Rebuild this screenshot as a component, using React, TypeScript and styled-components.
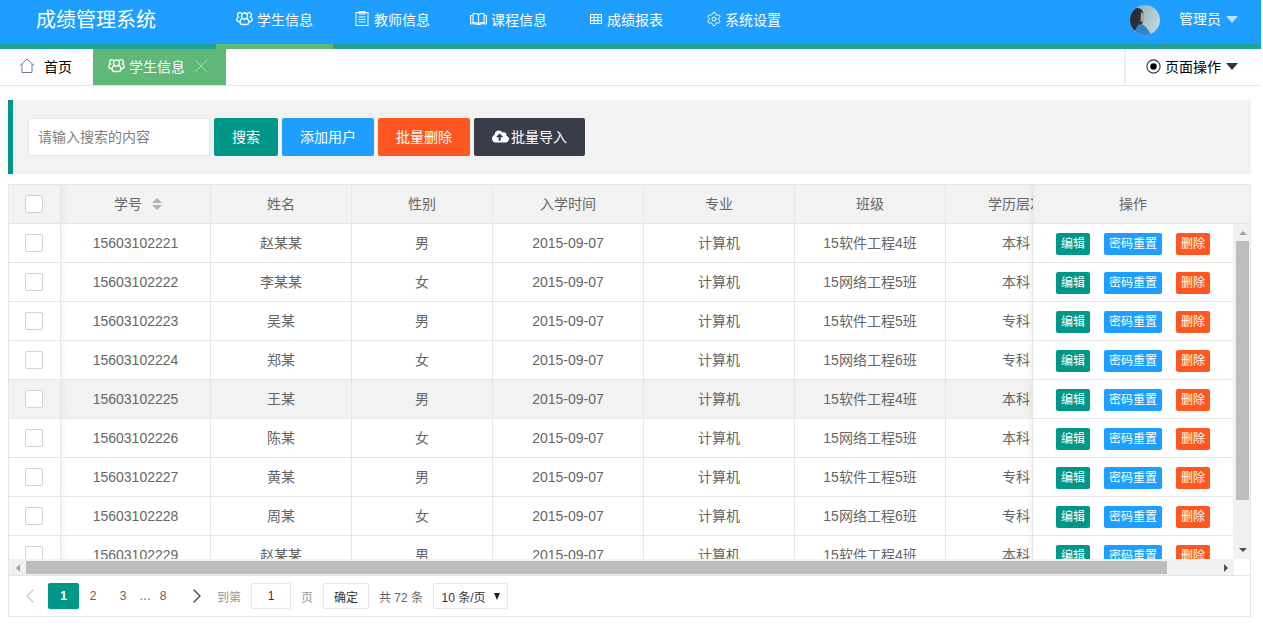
import React from 'react';
import styled, { createGlobalStyle } from 'styled-components';
import { ChevronLeft, ChevronRight, Settings, X } from 'lucide-react';
import { FaCloudUploadAlt } from 'react-icons/fa';

const FONT = '"Liberation Sans", "Noto Sans CJK SC", sans-serif';

const GlobalStyle = createGlobalStyle`
  html, body {
    margin: 0;
    padding: 0;
    background: #fff;
    overflow: hidden;
    font-family: ${FONT};
    font-size: 14px;
    color: #666;
  }
  * { box-sizing: border-box; }
`;

const Page = styled.div`
  width: 1261px;
  height: 629px;
  overflow: hidden;
`;

/* top bar */
const Header = styled.header`
  height: 49px;
  display: flex;
  background: #1e9fff;
  border-bottom: 5px solid #20a29a;
  color: #fff;
`;

const Title = styled.div`
  width: 216px;
  padding-left: 36px;
  font-size: 20px;
  line-height: 40px;
`;

const Nav = styled.nav`
  display: flex;
  flex: 1;
`;

const NavItem = styled.a<{ $active?: boolean; $w: number; $gap?: number }>`
  position: relative;
  flex: none;
  width: ${p => p.$w}px;
  height: 44px;
  padding-left: 20px;
  display: flex;
  align-items: flex-start;
  padding-top: 11px;
  gap: ${p => p.$gap ?? 4}px;
  line-height: 18px;
  white-space: nowrap;
  ${p => p.$active && `
    margin-right: 2px;
    &::after {
      content: '';
      position: absolute;
      left: 0;
      right: 0;
      bottom: -5px;
      height: 5px;
      background: #5fb878;
    }
  `}
`;

const User = styled.div`
  width: 131px;
  display: flex;
  align-items: flex-start;
  padding-top: 5px;
  line-height: 29px;
`;

const Avatar = styled.svg`
  width: 30px;
  height: 30px;
  border-radius: 50%;
  margin-right: 19px;
`;

const Caret = styled.i<{ $color: string }>`
  display: inline-block;
  width: 0;
  height: 0;
  margin-left: 5px;
  border-left: 6px solid transparent;
  border-right: 6px solid transparent;
  border-top: 7px solid ${p => p.$color};
`;

const UserCaret = styled(Caret)`
  margin-top: 11px;
`;

/* tab bar */
const TabBar = styled.div`
  height: 37px;
  display: flex;
  border-bottom: 1px solid #e4e4e4;
  color: #000;
`;

const Tab = styled.div<{ $active?: boolean; $w: number; $pad: number }>`
  width: ${p => p.$w}px;
  padding-left: ${p => p.$pad}px;
  padding-bottom: 2px;
  display: flex;
  align-items: center;
  gap: 4px;
  color: ${p => (p.$active ? '#fff' : '#000')};
  background: ${p => (p.$active ? '#5fb878' : '#fff')};
`;

const HomeLabel = styled.span`
  margin-left: 5px;
`;

const TabClose = styled(X)`
  margin-left: 1px;
  color: rgba(255, 255, 255, 0.5);
`;

const PageOps = styled.div`
  margin-left: auto;
  width: 137px;
  padding-left: 20px;
  padding-bottom: 2px;
  display: flex;
  align-items: center;
  gap: 4px;
  border-left: 2px solid #eee;
`;

const OpsCaret = styled(Caret)`
  margin-left: 1px;
  margin-top: 1px;
`;

/* search */
const SearchPanel = styled.section`
  margin: 14px 10px 10px 8px;
  height: 74px;
  padding: 18px 15px;
  display: flex;
  gap: 4px;
  background: #f2f2f2;
  border-left: 5px solid #009688;
`;

const SearchInput = styled.input`
  width: 182px;
  height: 38px;
  padding: 0 9px;
  border: 1px solid #e6e6e6;
  border-radius: 2px;
  outline: none;
  background: #fff;
  font-family: ${FONT};
  font-size: 14px;
  &::placeholder { color: #808080; }
`;

const Button = styled.button<{ $bg: string; $w: number }>`
  width: ${p => p.$w}px;
  height: 38px;
  padding: 0 0 2px;
  display: flex;
  align-items: center;
  justify-content: center;
  gap: 2px;
  border: 0;
  border-radius: 2px;
  color: #fff;
  background: ${p => p.$bg};
  font-family: ${FONT};
  font-size: 14px;
`;

/* table */
const TableBox = styled.section`
  margin-left: 8px;
  width: 1243px;
  height: 433px;
  display: flex;
  flex-direction: column;
  border: 1px solid #e6e6e6;
`;

const HeadRow = styled.div`
  height: 39px;
  flex: none;
  display: flex;
  background: #f2f2f2;
  border-bottom: 1px solid #e6e6e6;
`;

const Body = styled.div`
  height: 335px;
  flex: none;
  display: flex;
  overflow: hidden;
`;

const Rows = styled.div`
  flex: 1;
  min-width: 0;
`;

const Row = styled.div<{ $hover?: boolean }>`
  height: 39px;
  display: flex;
  background: ${p => (p.$hover ? '#f2f2f2' : '#fff')};
  border-bottom: 1px solid #e6e6e6;
`;

const CheckCell = styled.div`
  position: relative;
  z-index: 1;
  flex: none;
  width: 52px;
  display: flex;
  align-items: center;
  padding-left: 16px;
  border-right: 1px solid #e6e6e6;
  box-shadow: 1px 0 6px rgba(0, 0, 0, 0.08);
  clip-path: inset(0 -8px 0 0);
`;

const CheckBox = styled.i`
  display: block;
  width: 18px;
  height: 18px;
  background: #fff;
  border: 1px solid #d2d2d2;
  border-radius: 2px;
`;

const Scroller = styled.div`
  flex: 1;
  min-width: 0;
  display: flex;
  overflow: hidden;
`;

/* $cjk lifts the text a pixel, the CJK font sits lower than the latin one */
const Cell = styled.div<{ $w: number; $cjk?: boolean }>`
  flex: none;
  width: ${p => p.$w}px;
  padding-bottom: ${p => (p.$cjk ? 2 : 0)}px;
  display: flex;
  align-items: center;
  justify-content: center;
  white-space: nowrap;
  border-right: 1px solid #e6e6e6;
`;

const SortCell = styled(Cell)`
  gap: 10px;
  padding-left: 5px;
`;

const ActionHead = styled.div`
  position: relative;
  flex: none;
  width: 217px;
  display: flex;
  align-items: center;
  justify-content: center;
  padding: 0 18px 2px 0;
  border-left: 1px solid #e6e6e6;
  box-shadow: -1px 0 6px rgba(0, 0, 0, 0.08);
  clip-path: inset(0 0 0 -8px);
`;

const ActionCell = styled.div`
  position: relative;
  flex: none;
  width: 201px;
  padding-top: 2px;
  display: flex;
  align-items: center;
  justify-content: center;
  gap: 14px;
  background: #fff;
  border-left: 1px solid #e6e6e6;
  box-shadow: -1px 0 6px rgba(0, 0, 0, 0.08);
  clip-path: inset(0 0 0 -8px);
`;

const SmallButton = styled.button<{ $bg: string; $w: number }>`
  width: ${p => p.$w}px;
  height: 22px;
  padding: 0;
  border: 0;
  border-radius: 2px;
  color: #fff;
  background: ${p => p.$bg};
  font-family: ${FONT};
  font-size: 12px;
  line-height: 22px;
`;

const Sort = styled.span`
  display: flex;
  flex-direction: column;
  gap: 2px;
  margin-top: 2px;
`;

const SortArrow = styled.i<{ $up?: boolean }>`
  display: block;
  width: 0;
  height: 0;
  border-left: 5px solid transparent;
  border-right: 5px solid transparent;
  ${p => (p.$up ? 'border-bottom: 5px solid #b2b2b2;' : 'border-top: 5px solid #b2b2b2;')}
`;

/* scrollbars */
const VScroll = styled.div`
  flex: none;
  width: 17px;
  display: flex;
  flex-direction: column;
  align-items: center;
  background: #f1f1f1;
  padding: 0 1px 0 3px;
`;

const VThumb = styled.div`
  width: 13px;
  height: 259px;
  background: #bdbdbd;
`;

const ArrowBox = styled.div<{ $h: number; $w?: number }>`
  flex: none;
  height: ${p => p.$h}px;
  width: ${p => p.$w ?? 13}px;
  display: flex;
  align-items: center;
  justify-content: center;
`;

const Tri = styled.i<{ $dir: 'up' | 'down' | 'left' | 'right'; $color: string }>`
  display: block;
  width: 0;
  height: 0;
  ${p => p.$dir === 'up' && `border-left: 4px solid transparent; border-right: 4px solid transparent; border-bottom: 4px solid ${p.$color};`}
  ${p => p.$dir === 'down' && `border-left: 4px solid transparent; border-right: 4px solid transparent; border-top: 4px solid ${p.$color};`}
  ${p => p.$dir === 'left' && `border-top: 4px solid transparent; border-bottom: 4px solid transparent; border-right: 4px solid ${p.$color};`}
  ${p => p.$dir === 'right' && `border-top: 4px solid transparent; border-bottom: 4px solid transparent; border-left: 4px solid ${p.$color};`}
`;

const VGap = styled.div`
  flex: 1;
`;

const HScroll = styled.div`
  height: 17px;
  flex: none;
  display: flex;
  border-bottom: 1px solid #e6e6e6;
`;

const HTrack = styled.div`
  width: 1225px;
  padding: 2px 0 1px;
  display: flex;
  align-items: center;
  background: #f1f1f1;
`;

const HThumb = styled.div`
  width: 1141px;
  height: 13px;
  background: #bdbdbd;
`;

const HRight = styled.div`
  margin-left: auto;
`;

/* pager */
const Pager = styled.div`
  flex: 1;
  display: flex;
  align-items: center;
  padding-left: 9px;
  font-size: 12px;
  color: #666;
`;

const PagerIcon = styled.span<{ $ml: number; $mr: number; $color: string }>`
  display: flex;
  margin: 0 ${p => p.$mr}px 0 ${p => p.$ml}px;
  color: ${p => p.$color};
`;

const PageNum = styled.span<{ $w: number }>`
  width: ${p => p.$w}px;
  text-align: center;
`;

const PageCurrent = styled.span`
  width: 31px;
  height: 26px;
  margin-left: 6px;
  line-height: 26px;
  text-align: center;
  font-weight: bold;
  color: #fff;
  background: #009688;
  border-radius: 2px;
`;

const PagerLabel = styled.span<{ $ml: number; $color?: string }>`
  margin-left: ${p => p.$ml}px;
  color: ${p => p.$color ?? '#666'};
  white-space: nowrap;
`;

const PagerBox = styled.div<{ $w: number; $ml: number }>`
  width: ${p => p.$w}px;
  height: 26px;
  margin-left: ${p => p.$ml}px;
  display: flex;
  align-items: center;
  justify-content: center;
  color: #333;
  background: #fff;
  border: 1px solid #e6e6e6;
  border-radius: 2px;
  white-space: nowrap;
`;

const SelectCaret = styled.i`
  margin-left: 8px;
  width: 0;
  height: 0;
  border-left: 3.5px solid transparent;
  border-right: 3.5px solid transparent;
  border-top: 7px solid #222;
`;

function GroupIcon() {
  return (
    <svg width="17" height="16" viewBox="0 0 17 16" fill="none" stroke="currentColor" strokeWidth="1.3">
      <circle cx="8.5" cy="5" r="3" />
      <path d="M6 3.4C5.6 2.2 4.6 1.6 3.6 1.7 2.2 1.9 1.4 3 1.6 4.4c.1.7.5 1.2 1 1.6-1.2.6-2 1.7-1.8 3 .2 1 1 1.6 2 1.6h1.6" />
      <path d="M11 3.4c.4-1.2 1.4-1.8 2.4-1.7 1.4.2 2.2 1.3 2 2.7-.1.7-.5 1.2-1 1.6 1.2.6 2 1.7 1.8 3-.2 1-1 1.6-2 1.6h-1.6" />
      <path d="M6.3 7.6C4.7 8.3 3.8 9.8 4 11.4c.2 1.4 1.2 2.1 2.4 2.1h4.2c1.2 0 2.2-.7 2.4-2.1.2-1.6-.7-3.1-2.3-3.8" />
    </svg>
  );
}

function ClipboardIcon() {
  return (
    <svg width="15" height="16" viewBox="0 0 15 16" fill="none" stroke="currentColor" strokeWidth="1">
      <rect x="1" y="1.5" width="12" height="13" />
      <path d="M4 .5h6v2.5H4zM3.500 6h7M3.500 8.500h7M3.500 11h7" />
    </svg>
  );
}

function BookIcon() {
  return (
    <svg width="17" height="16" viewBox="0 0 17 16" fill="none" stroke="currentColor" strokeWidth="1.1">
      <path d="M.6 13V4.500H3M16.400 13V4.500H14" />
      <path d="M8.500 13.500V3.800C7.400 2.600 5 2.300 3 2.800v9c2-.4 4.400-.1 5.500 1.700 1.100-1.800 3.500-2.100 5.500-1.700v-9c-2-.5-4.400-.2-5.500 1" />
      <path d="M.6 13c2.500-.3 5.500-.2 7.900.5 2.400-.7 5.400-.8 7.900-.5" />
    </svg>
  );
}

function GridIcon() {
  return (
    <svg width="14" height="16" viewBox="0 0 14 16" fill="none" stroke="currentColor" strokeWidth="1">
      <rect x="1.500" y="3.500" width="11" height="9" />
      <path d="M1.500 6.500h11M1.500 9.500h11M5.200 3.500v9M8.800 3.500v9" />
    </svg>
  );
}

function HomeIcon() {
  return (
    <svg width="16" height="16" viewBox="0 0 16 16" fill="none" stroke="#6f7a96" strokeWidth="1">
      <path d="M.7 7.800 8 1l7.300 6.800" />
      <path d="M3 6v8.500h10V6" />
    </svg>
  );
}

function RadioIcon() {
  return (
    <svg width="15" height="15" viewBox="0 0 15 15">
      <circle cx="7.500" cy="7.500" r="6.600" fill="none" stroke="#333" strokeWidth="1.100" />
      <circle cx="7.500" cy="7.500" r="3.200" fill="#000" />
    </svg>
  );
}

function UserAvatar() {
  return (
    <Avatar viewBox="0 0 30 30">
      <defs>
        <linearGradient id="sky" x1="0" y1="0" x2="1" y2="0.4">
          <stop offset="0" stopColor="#7fa9b3" />
          <stop offset="1" stopColor="#bcd5d8" />
        </linearGradient>
      </defs>
      <rect width="30" height="30" fill="url(#sky)" />
      <path d="M0 8C3 2 9 2 12 5c2 3 2 7 1 11-1 3-2 6-4 8l-9 3z" fill="#27303a" />
      <path d="M11 7c2 .5 3.500 3 3.500 5.500 0 1-.5 2-1.500 3-.5 1-1.500 1.500-2.500 1.500z" fill="#b79c90" />
      <path d="M5 30c0-6 2-11 6-11 3 0 7 5 10 11z" fill="#2f85c4" />
    </Avatar>
  );
}

const students = [
  ['15603102221', '赵某某', '男', '15软件工程4班', '本科'],
  ['15603102222', '李某某', '女', '15网络工程5班', '本科'],
  ['15603102223', '吴某', '男', '15软件工程5班', '专科'],
  ['15603102224', '郑某', '女', '15网络工程6班', '专科'],
  ['15603102225', '王某', '男', '15软件工程4班', '本科'],
  ['15603102226', '陈某', '女', '15网络工程5班', '本科'],
  ['15603102227', '黄某', '男', '15软件工程5班', '专科'],
  ['15603102228', '周某', '女', '15网络工程6班', '专科'],
  ['15603102229', '赵某某', '男', '15软件工程4班', '本科'],
];

const GREEN = '#009688';
const BLUE = '#1e9fff';
const ORANGE = '#ff5722';

export default function App() {
  return (
    <Page>
      <GlobalStyle />
      <Header>
        <Title>成绩管理系统</Title>
        <Nav>
          <NavItem $active $w={117}><GroupIcon />学生信息</NavItem>
          <NavItem $w={115}><ClipboardIcon />教师信息</NavItem>
          <NavItem $w={119}><BookIcon />课程信息</NavItem>
          <NavItem $w={117}><GridIcon />成绩报表</NavItem>
          <NavItem $w={120} $gap={3}><Settings size={16} strokeWidth={1.5} />系统设置</NavItem>
        </Nav>
        <User>
          <UserAvatar />
          管理员
          <UserCaret $color="rgba(255,255,255,0.7)" />
        </User>
      </Header>

      <TabBar>
        <Tab $w={93} $pad={19}><HomeIcon /><HomeLabel>首页</HomeLabel></Tab>
        <Tab $active $w={133} $pad={15}><GroupIcon />学生信息<TabClose size={22} strokeWidth={1} /></Tab>
        <PageOps><RadioIcon />页面操作<OpsCaret $color="#333" /></PageOps>
      </TabBar>

      <SearchPanel>
        <SearchInput placeholder="请输入搜索的内容" />
        <Button $bg={GREEN} $w={64}>搜索</Button>
        <Button $bg={BLUE} $w={92}>添加用户</Button>
        <Button $bg={ORANGE} $w={92}>批量删除</Button>
        <Button $bg="#393d49" $w={111}><FaCloudUploadAlt size={17} />批量导入</Button>
      </SearchPanel>

      <TableBox>
        <HeadRow>
          <CheckCell><CheckBox /></CheckCell>
          <Scroller>
            <SortCell $cjk $w={150}>学号<Sort><SortArrow $up /><SortArrow /></Sort></SortCell>
            <Cell $cjk $w={141}>姓名</Cell>
            <Cell $cjk $w={141}>性别</Cell>
            <Cell $cjk $w={151}>入学时间</Cell>
            <Cell $cjk $w={151}>专业</Cell>
            <Cell $cjk $w={151}>班级</Cell>
            <Cell $cjk $w={141}>学历层次</Cell>
          </Scroller>
          <ActionHead>操作</ActionHead>
        </HeadRow>
        <Body>
          <Rows>
            {students.map((s, i) => (
              <Row key={s[0]} $hover={i === 4}>
                <CheckCell><CheckBox /></CheckCell>
                <Scroller>
                  <Cell $w={150}>{s[0]}</Cell>
                  <Cell $cjk $w={141}>{s[1]}</Cell>
                  <Cell $cjk $w={141}>{s[2]}</Cell>
                  <Cell $w={151}>2015-09-07</Cell>
                  <Cell $cjk $w={151}>计算机</Cell>
                  <Cell $cjk $w={151}>{s[3]}</Cell>
                  <Cell $cjk $w={141}>{s[4]}</Cell>
                </Scroller>
                <ActionCell>
                  <SmallButton $bg={GREEN} $w={34}>编辑</SmallButton>
                  <SmallButton $bg={BLUE} $w={58}>密码重置</SmallButton>
                  <SmallButton $bg={ORANGE} $w={34}>删除</SmallButton>
                </ActionCell>
              </Row>
            ))}
          </Rows>
          <VScroll>
            <ArrowBox $h={17}><Tri $dir="up" $color="#a3a3a3" /></ArrowBox>
            <VThumb />
            <VGap />
            <ArrowBox $h={19}><Tri $dir="down" $color="#505050" /></ArrowBox>
          </VScroll>
        </Body>
        <HScroll>
          <HTrack>
            <ArrowBox $h={13} $w={17}><Tri $dir="left" $color="#a3a3a3" /></ArrowBox>
            <HThumb />
            <HRight>
              <ArrowBox $h={13} $w={17}><Tri $dir="right" $color="#505050" /></ArrowBox>
            </HRight>
          </HTrack>
        </HScroll>
        <Pager>
          <PagerIcon $ml={0} $mr={0} $color="#d2d2d2"><ChevronLeft size={24} strokeWidth={1.500} /></PagerIcon>
          <PageCurrent>1</PageCurrent>
          <PageNum $w={28}>2</PageNum>
          <PageNum $w={32}>3</PageNum>
          <PageNum $w={10}>…</PageNum>
          <PageNum $w={28}>8</PageNum>
          <PagerIcon $ml={8} $mr={8} $color="#555"><ChevronRight size={24} strokeWidth={1.500} /></PagerIcon>
          <PagerLabel $ml={0} $color="#999">到第</PagerLabel>
          <PagerBox $w={40} $ml={10}>1</PagerBox>
          <PagerLabel $ml={10} $color="#999">页</PagerLabel>
          <PagerBox $w={46} $ml={10}>确定</PagerBox>
          <PagerLabel $ml={10}>共 72 条</PagerLabel>
          <PagerBox $w={75} $ml={10}>10 条/页<SelectCaret /></PagerBox>
        </Pager>
      </TableBox>
    </Page>
  );
}
